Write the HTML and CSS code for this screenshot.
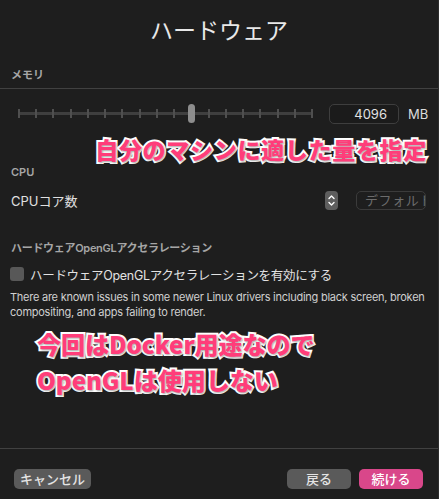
FILE: index.html
```html
<!DOCTYPE html>
<html lang="ja">
<head>
<meta charset="utf-8">
<title>ハードウェア</title>
<link rel="stylesheet" href="styles.css">
</head>
<body>
<div class="window">
  <h1 class="title">ハードウェア</h1>

  <div class="section-label mem-label">メモリ</div>
  <div class="divider top-divider"></div>

  <div class="mem-row">
    <div class="slider">
      <div class="track"></div>
      <div class="ticks">
        <span></span><span></span><span></span><span></span><span></span><span></span>
        <span></span><span></span><span></span><span></span><span></span><span></span>
        <span></span><span></span><span></span><span></span><span></span><span></span>
      </div>
      <div class="knob" style="left: 58.82%"></div>
    </div>
    <div class="num-field">4096</div>
    <div class="unit">MB</div>
  </div>

  <div class="note note-1">自分のマシンに適した量を指定</div>

  <div class="section-label cpu-label">CPU</div>
  <div class="cpu-row">
    <div class="cpu-name">CPUコア数</div>
    <div class="stepper">
      <svg width="13" height="19" viewBox="0 0 13 19">
        <path d="M4 7.5 L6.5 5 L9 7.5" fill="none" stroke="#fff" stroke-width="1.4" stroke-linecap="round" stroke-linejoin="round"/>
        <path d="M4 11.5 L6.5 14 L9 11.5" fill="none" stroke="#fff" stroke-width="1.4" stroke-linecap="round" stroke-linejoin="round"/>
      </svg>
    </div>
    <div class="default-field"><span>デフォルト</span></div>
  </div>

  <div class="section-label gl-label">ハードウェアOpenGLアクセラレーション</div>
  <label class="check-row">
    <span class="checkbox"></span>
    <span class="check-text">ハードウェアOpenGLアクセラレーションを有効にする</span>
  </label>
  <p class="desc">There are known issues in some newer Linux drivers including black screen, broken compositing, and apps failing to render.</p>

  <div class="note note-2">今回はDocker用途なので<br>OpenGLは使用しない</div>

  <div class="spacer"></div>
  <div class="divider bottom-divider"></div>

  <div class="buttons">
    <button class="btn btn-cancel">キャンセル</button>
    <div class="btn-group">
      <button class="btn btn-back">戻る</button>
      <button class="btn btn-primary">続ける</button>
    </div>
  </div>
</div>
</body>
</html>
```

FILE: styles.css
```css
* { box-sizing: border-box; }

html, body {
  margin: 0;
  padding: 0;
  background: #1e1e1e;
}

body {
  font-family: Inter, "Noto Sans CJK JP", sans-serif;
  color: #dcdcdc;
}

.window {
  width: 439px;
  height: 499px;
  display: flex;
  flex-direction: column;
  background: #1e1e1e;
  border-right: 1px solid #2c2c2c;
  overflow: hidden;
}

.title {
  margin: 0;
  padding-top: 14px;
  font-size: 23px;
  line-height: 30px;
  font-weight: 400;
  text-align: center;
  color: #e8e8e8;
  font-family: "Noto Sans CJK JP", sans-serif;
}

.section-label {
  font-size: 11px;
  line-height: 14px;
  font-weight: 600;
  color: #a6a6a6;
  padding-left: 11px;
}

.mem-label { margin-top: 24px; }

.divider {
  height: 1px;
  background: #414141;
  flex: none;
}

.top-divider { margin-top: 6px; }

.mem-row {
  margin-top: 15px;
  height: 20px;
  display: flex;
  align-items: center;
  padding-left: 18px;
}

.slider {
  position: relative;
  width: 293px;
  height: 20px;
}

.track {
  position: absolute;
  left: 0;
  right: 0;
  top: 8px;
  height: 3px;
  background: #3f3f3f;
}

.ticks {
  position: absolute;
  left: 0;
  right: -2px;
  top: 5px;
  height: 9px;
  display: flex;
  justify-content: space-between;
}

.ticks span {
  width: 2px;
  height: 9px;
  background: #4f4f4f;
}

.knob {
  position: absolute;
  top: 0;
  width: 7px;
  height: 19px;
  margin-left: -2px;
  border-radius: 4px;
  background: #8d8d8d;
}

.num-field {
  margin-left: 18px;
  width: 70px;
  height: 20px;
  border: 1px solid #3e3e3e;
  border-radius: 5px;
  background: #1b1b1b;
  font-size: 13px;
  line-height: 18px;
  text-align: right;
  padding-right: 11px;
  color: #e2e2e2;
}

.unit {
  margin-left: 9px;
  font-size: 13px;
  color: #dcdcdc;
}

.note {
  font-family: "Noto Sans CJK JP", sans-serif;
  font-weight: 900;
  color: #ff3d7a;
  -webkit-text-stroke: 4px #ffffff;
  paint-order: stroke fill;
  text-shadow: 1px 1px 2px rgba(0, 0, 0, 0.35);
}

.note-1 {
  margin-top: 11px;
  font-size: 23px;
  line-height: 28px;
  text-align: right;
  padding-right: 11px;
  letter-spacing: 0.7px;
}

.cpu-label { margin-top: 2px; }

.cpu-row {
  margin-top: 11px;
  height: 20px;
  display: flex;
  align-items: center;
  padding-left: 11px;
  padding-right: 12px;
}

.cpu-name {
  flex: 1;
  font-size: 13px;
  color: #e0e0e0;
}

.stepper {
  width: 13px;
  height: 19px;
  border-radius: 4px;
  background: #5e5e5e;
  display: flex;
}

.default-field {
  margin-left: 18px;
  width: 70px;
  height: 19px;
  border: 1px solid #3b3b3b;
  border-radius: 5px;
  overflow: hidden;
  white-space: nowrap;
  font-size: 13px;
  line-height: 17px;
  color: #6c6c6c;
  padding-left: 8px;
  letter-spacing: 0.6px;
}

.gl-label {
  margin-top: 31px;
  letter-spacing: -0.3px;
}

.check-row {
  margin-top: 11px;
  height: 16px;
  display: flex;
  align-items: center;
  padding-left: 10px;
  gap: 6px;
}

.checkbox {
  width: 14px;
  height: 14px;
  border-radius: 3px;
  background: #585858;
}

.check-text {
  font-size: 12.5px;
  letter-spacing: -0.3px;
  color: #e2e2e2;
}

.desc {
  margin: 8px 0 0;
  padding: 0 12px 0 10px;
  font-size: 11px;
  line-height: 15px;
  letter-spacing: -0.25px;
  color: #d0d0d0;
}

.note-2 {
  margin-top: 6px;
  padding-left: 37px;
  font-size: 24px;
  line-height: 36px;
}

.spacer { flex: 1; }

.buttons {
  margin-top: 20px;
  margin-bottom: 10px;
  display: flex;
  justify-content: space-between;
  padding: 0 15px 0 14px;
}

.btn-group {
  display: flex;
  gap: 8px;
}

.btn {
  height: 20px;
  border: none;
  border-radius: 5px;
  font-family: "Noto Sans CJK JP", sans-serif;
  font-size: 13px;
  line-height: 20px;
  padding: 0;
  color: #e4e4e4;
  background: #5a5a5a;
  font-weight: 500;
}

.btn-cancel { width: 77px; }
.btn-back { width: 64px; }
.btn-primary {
  width: 64px;
  background: #d9478a;
  color: #ffffff;
}
```
